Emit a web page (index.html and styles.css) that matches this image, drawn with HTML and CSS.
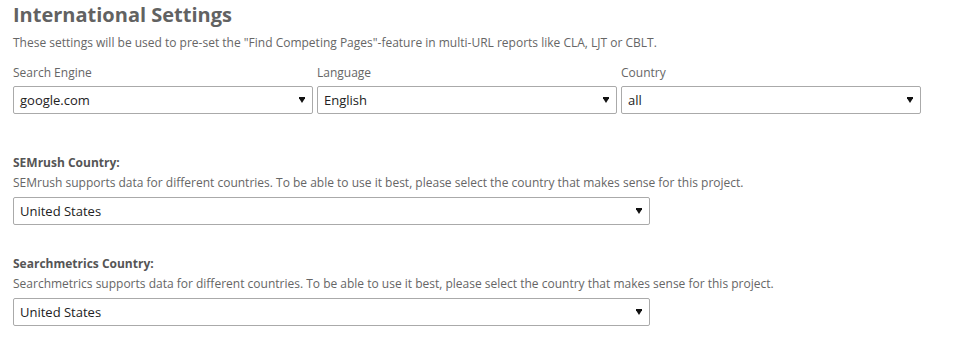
FILE: index.html
```html
<!DOCTYPE html>
<html lang="en">
<head>
<meta charset="utf-8">
<title>International Settings</title>
<link rel="stylesheet" href="styles.css">
</head>
<body>
<div class="page">
  <h1 class="title">International Settings</h1>
  <p class="desc intro">These settings will be used to pre-set the "Find Competing Pages"-feature in multi-URL reports like CLA, LJT or CBLT.</p>

  <div class="grid3">
    <div class="field">
      <div class="label">Search Engine</div>
      <div class="select"><span class="value">google.com</span><svg class="arrow" width="6" height="6" viewBox="0 0 6 6"><path d="M0 0H6V1.2L3 6L0 1.2Z" fill="#111"/></svg></div>
    </div>
    <div class="field">
      <div class="label">Language</div>
      <div class="select"><span class="value">English</span><svg class="arrow" width="6" height="6" viewBox="0 0 6 6"><path d="M0 0H6V1.2L3 6L0 1.2Z" fill="#111"/></svg></div>
    </div>
    <div class="field">
      <div class="label">Country</div>
      <div class="select"><span class="value">all</span><svg class="arrow" width="6" height="6" viewBox="0 0 6 6"><path d="M0 0H6V1.2L3 6L0 1.2Z" fill="#111"/></svg></div>
    </div>
  </div>

  <div class="section first">
    <div class="label bold">SEMrush Country:</div>
    <p class="desc">SEMrush supports data for different countries. To be able to use it best, please select the country that makes sense for this project.</p>
    <div class="select wide"><span class="value">United States</span><svg class="arrow" width="6" height="6" viewBox="0 0 6 6"><path d="M0 0H6V1.2L3 6L0 1.2Z" fill="#111"/></svg></div>
  </div>

  <div class="section">
    <div class="label bold">Searchmetrics Country:</div>
    <p class="desc">Searchmetrics supports data for different countries. To be able to use it best, please select the country that makes sense for this project.</p>
    <div class="select wide"><span class="value">United States</span><svg class="arrow" width="6" height="6" viewBox="0 0 6 6"><path d="M0 0H6V1.2L3 6L0 1.2Z" fill="#111"/></svg></div>
  </div>
</div>
</body>
</html>
```

FILE: styles.css
```css
* { box-sizing: border-box; }
html, body {
  margin: 0;
  padding: 0;
  background: #fff;
}
body {
  font-family: "Open Sans", "Liberation Sans", sans-serif;
  color: #666;
}
.page {
  padding: 1px 0 0 13px;
}
.title {
  margin: 0;
  font-size: 20px;
  line-height: 28px;
  font-weight: 700;
  color: #626262;
}
.desc {
  margin: 0;
  font-size: 12px;
  line-height: 16px;
  color: #666;
}
.intro {
  margin-top: 6px;
}
.grid3 {
  margin-top: 14px;
  display: grid;
  grid-template-columns: 300px 300px 300px;
  column-gap: 4px;
}
.field {
  display: flex;
  flex-direction: column;
  gap: 5px;
}
.label {
  font-size: 12px;
  line-height: 16px;
  color: #666;
}
.label.bold {
  font-weight: 700;
  color: #555;
}
.select {
  height: 28px;
  border: 1px solid #aaa;
  border-radius: 2px;
  background: #fff;
  display: flex;
  align-items: center;
  justify-content: space-between;
  padding: 0 7px 0 6px;
}
.select.wide {
  width: 637px;
}
.value {
  font-size: 13px;
  color: #222;
  line-height: 18px;
}
.arrow {
  display: block;
  flex: none;
}
.section {
  margin-top: 31px;
  display: flex;
  flex-direction: column;
}
.section.first {
  margin-top: 41px;
}
.section .desc {
  margin-top: 4px;
  margin-bottom: 6px;
}
```
